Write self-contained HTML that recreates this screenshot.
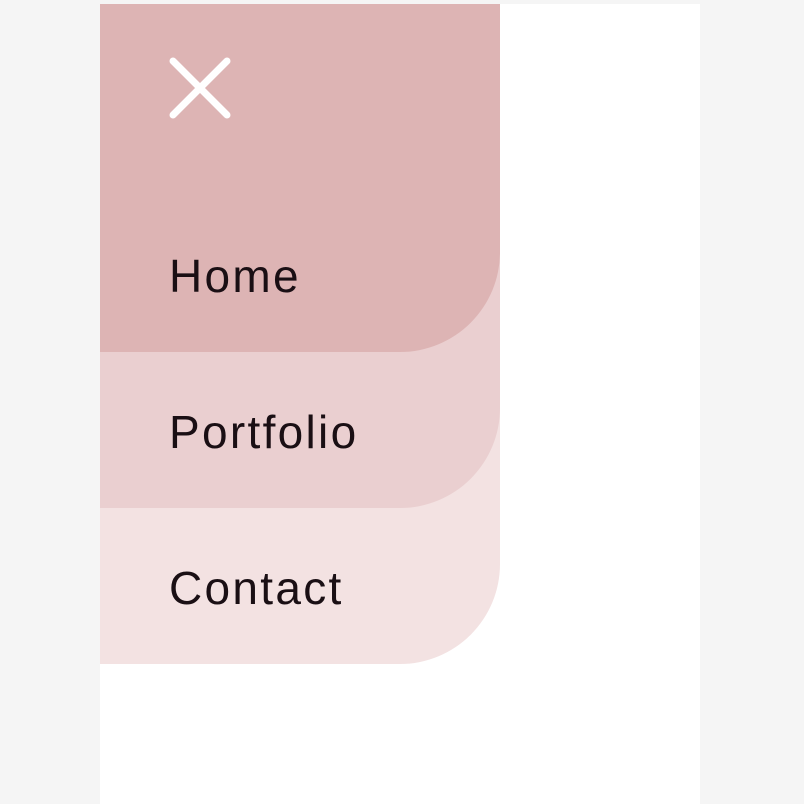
<!DOCTYPE html>
<html><head><style>
html,body{margin:0;padding:0;background:#f5f5f5;width:804px;height:804px;overflow:hidden}
.panel{position:absolute;left:100px;top:4px;width:600px;height:800px;background:#fff}
.m{position:absolute;left:100px;width:400px;border-bottom-right-radius:100px}
.t{position:absolute;left:69px;font-family:"Liberation Sans",sans-serif;font-size:46px;color:#1a0f14;line-height:1;letter-spacing:2.3px}
</style></head><body>
<div class="panel"></div>
<div class="m" style="top:4px;height:660px;background:#f3e2e2"></div>
<div class="m" style="top:4px;height:504px;background:#eacfd0"></div>
<div class="m" style="top:4px;height:348px;background:#ddb4b4"></div>
<svg style="position:absolute;left:0;top:0" width="804" height="804">
<path d="M173 61L227 115M227 61L173 115" stroke="#fff" stroke-width="7" stroke-linecap="round"/>
</svg>
<div class="t" style="top:253px;left:169px">Home</div>
<div class="t" style="top:409px;left:169px">Portfolio</div>
<div class="t" style="top:565px;left:169px">Contact</div>
</body></html>
